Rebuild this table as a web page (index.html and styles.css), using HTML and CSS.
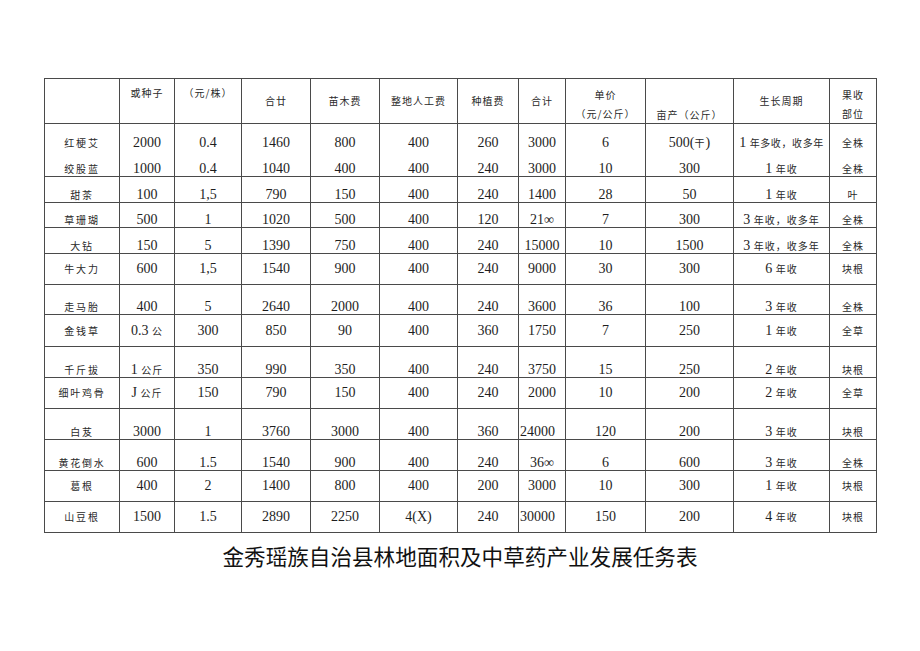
FILE: index.html
```html
<!DOCTYPE html>
<html lang="zh-CN">
<head>
<meta charset="utf-8">
<title>金秀瑶族自治县林地面积及中草药产业发展任务表</title>
<link rel="stylesheet" href="styles.css">
</head>
<body>
<div class="page">
  <table class="grid">
    <colgroup>
      <col class="w75"><col class="w55"><col class="w67"><col class="w69"><col class="w69"><col class="w78">
      <col class="w61"><col class="w47"><col class="w80"><col class="w88"><col class="w96"><col class="w47">
    </colgroup>
    <thead>
      <tr class="head">
        <th></th>
        <th class="top"><span class="c">或种子</span></th>
        <th class="top"><span class="c">（元/株）</span></th>
        <th><span class="c">合廿</span></th>
        <th><span class="c">苗木费</span></th>
        <th><span class="c">整地人工费</span></th>
        <th><span class="c">种植费</span></th>
        <th><span class="c">合计</span></th>
        <th class="two"><span class="c">单价</span><br><span class="c">（元/公斤）</span></th>
        <th class="low"><span class="c">亩产（公斤）</span></th>
        <th><span class="c">生长周期</span></th>
        <th class="two"><span class="c">果收</span><br><span class="c">部位</span></th>
      </tr>
    </thead>
    <tbody>
      <tr class="r1 nob">
        <td><span class="n">红梗艾</span></td><td>2000</td><td>0.4</td><td>1460</td><td>800</td><td>400</td><td>260</td><td>3000</td><td>6</td><td>500(<span class="c">干</span>)</td><td class="tight">1 <span class="c">年多收，收多年</span></td><td><span class="c">全株</span></td>
      </tr>
      <tr class="r2">
        <td><span class="n">绞股蓝</span></td><td>1000</td><td>0.4</td><td>1040</td><td>400</td><td>400</td><td>240</td><td>3000</td><td>10</td><td>300</td><td>1 <span class="c">年收</span></td><td><span class="c">全株</span></td>
      </tr>
      <tr class="r3">
        <td><span class="n">甜茶</span></td><td>100</td><td>1,5</td><td>790</td><td>150</td><td>400</td><td>240</td><td>1400</td><td>28</td><td>50</td><td>1 <span class="c">年收</span></td><td><span class="c">叶</span></td>
      </tr>
      <tr class="r4">
        <td><span class="n">草珊瑚</span></td><td>500</td><td>1</td><td>1020</td><td>500</td><td>400</td><td>120</td><td>21∞</td><td>7</td><td>300</td><td>3 <span class="c">年收，收多年</span></td><td><span class="c">全株</span></td>
      </tr>
      <tr class="r5">
        <td><span class="n">大钻</span></td><td>150</td><td>5</td><td>1390</td><td>750</td><td>400</td><td>240</td><td>15000</td><td>10</td><td>1500</td><td>3 <span class="c">年收，收多年</span></td><td><span class="c">全株</span></td>
      </tr>
      <tr class="r6 mid">
        <td><span class="n">牛大力</span></td><td>600</td><td>1,5</td><td>1540</td><td>900</td><td>400</td><td>240</td><td>9000</td><td>30</td><td>300</td><td>6 <span class="c">年收</span></td><td><span class="c">块根</span></td>
      </tr>
      <tr class="r7">
        <td><span class="n">走马胎</span></td><td>400</td><td>5</td><td>2640</td><td>2000</td><td>400</td><td>240</td><td>3600</td><td>36</td><td>100</td><td>3 <span class="c">年收</span></td><td><span class="c">全株</span></td>
      </tr>
      <tr class="r8 mid">
        <td><span class="n">金钱草</span></td><td>0.3 <span class="c">公</span></td><td>300</td><td>850</td><td>90</td><td>400</td><td>360</td><td>1750</td><td>7</td><td>250</td><td>1 <span class="c">年收</span></td><td><span class="c">全草</span></td>
      </tr>
      <tr class="r9">
        <td><span class="n">千斤拔</span></td><td>1 <span class="c">公斤</span></td><td>350</td><td>990</td><td>350</td><td>400</td><td>240</td><td>3750</td><td>15</td><td>250</td><td>2 <span class="c">年收</span></td><td><span class="c">块根</span></td>
      </tr>
      <tr class="r10 mid">
        <td><span class="n">细叶鸡骨</span></td><td>J <span class="c">公斤</span></td><td>150</td><td>790</td><td>150</td><td>400</td><td>240</td><td>2000</td><td>10</td><td>200</td><td>2 <span class="c">年收</span></td><td><span class="c">全草</span></td>
      </tr>
      <tr class="r11">
        <td><span class="n">白芨</span></td><td>3000</td><td>1</td><td>3760</td><td>3000</td><td>400</td><td>360</td><td class="left">24000</td><td>120</td><td>200</td><td>3 <span class="c">年收</span></td><td><span class="c">块根</span></td>
      </tr>
      <tr class="r12">
        <td><span class="n">黄花倒水</span></td><td>600</td><td>1.5</td><td>1540</td><td>900</td><td>400</td><td>240</td><td>36∞</td><td>6</td><td>600</td><td>3 <span class="c">年收</span></td><td><span class="c">全株</span></td>
      </tr>
      <tr class="r13 mid">
        <td><span class="n">葛根</span></td><td>400</td><td>2</td><td>1400</td><td>800</td><td>400</td><td>200</td><td>3000</td><td>10</td><td>300</td><td>1 <span class="c">年收</span></td><td><span class="c">块根</span></td>
      </tr>
      <tr class="r14 mid">
        <td><span class="n">山豆根</span></td><td>1500</td><td>1.5</td><td>2890</td><td>2250</td><td>4(X)</td><td>240</td><td class="left">30000</td><td>150</td><td>200</td><td>4 <span class="c">年收</span></td><td><span class="c">块根</span></td>
      </tr>
    </tbody>
  </table>
  <h1 class="title">金秀瑶族自治县林地面积及中草药产业发展任务表</h1>
</div>
</body>
</html>
```

FILE: styles.css
```css
html, body {
  margin: 0;
  padding: 0;
  background: #ffffff;
}

.page {
  width: 832px;
  padding: 78px 0 0 44px;
}

.grid {
  width: 832px;
  table-layout: fixed;
  border-collapse: collapse;
  font-family: "Liberation Serif", "Noto Sans CJK SC", serif;
  font-size: 14px;
  color: #1e1e1e;
}

.w75 { width: 75px; }
.w55 { width: 55px; }
.w67 { width: 67px; }
.w69 { width: 69px; }
.w78 { width: 78px; }
.w61 { width: 61px; }
.w47 { width: 47px; }
.w80 { width: 80px; }
.w88 { width: 88px; }
.w96 { width: 96px; }

.grid th,
.grid td {
  border: 1px solid #4a4a4a;
  padding: 0;
  text-align: center;
  vertical-align: bottom;
  line-height: 14px;
  font-weight: normal;
  white-space: nowrap;
  overflow: visible;
}

.c {
  font-family: "Noto Sans CJK SC", "Noto Sans", sans-serif;
  font-size: 10px;
  letter-spacing: 1px;
  color: #2a2a2a;
}

.n {
  font-family: "Noto Sans CJK SC", "Noto Sans", sans-serif;
  font-size: 10px;
  letter-spacing: 1.8px;
  color: #2a2a2a;
}

.head { height: 44px; }
.head th { vertical-align: middle; line-height: 12px; padding: 0; }
.head th.top { vertical-align: top; padding-top: 8px; }
.head th.two { vertical-align: top; padding-top: 6px; line-height: 19px; }
.head th.low { vertical-align: bottom; padding-bottom: 2px; }

.nob td { border-bottom-style: hidden; }

.tight .c { letter-spacing: 0.6px; }

.grid td.left { text-align: left; padding-left: 1px; }

.mid td { vertical-align: middle; }

.r1 { height: 26px; }
.r2 { height: 27px; }
.r3 { height: 26px; }
.r4 { height: 25px; }
.r5 { height: 26px; }
.r6 { height: 31px; }
.r7 { height: 30px; }
.r8 { height: 32px; }
.r9 { height: 31px; }
.r10 { height: 31px; }
.r11 { height: 31px; }
.r12 { height: 31px; }
.r13 { height: 31px; }
.r14 { height: 31px; }

.title {
  margin: 8px 0 0 0;
  font-family: "Noto Sans CJK SC", "Noto Sans", sans-serif;
  font-size: 21.6px;
  font-weight: normal;
  line-height: 30px;
  text-align: center;
  color: #111111;
}
```
